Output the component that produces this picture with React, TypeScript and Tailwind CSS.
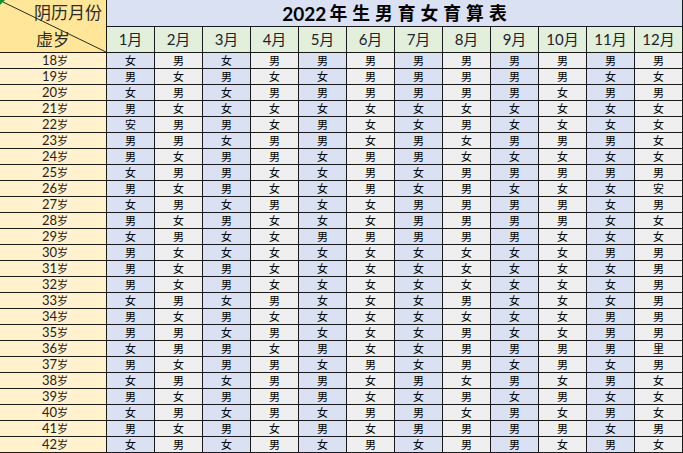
const months = ['1月', '2月', '3月', '4月', '5月', '6月', '7月', '8月', '9月', '10月', '11月', '12月']

// 男 = M, 女 = F; odd glyphs kept as they appear in the sheet
const rows: [number, string][] = [
  [18, 'FMFMMMMMMMMM'],
  [19, 'MFMFFMMMMMFF'],
  [20, 'FMFMMMMMMFMM'],
  [21, 'MFFFFFFFFFFF'],
  [22, '安MMFMFFMFFFF'],
  [23, 'MMFMMFMFMMMF'],
  [24, 'MFMMFMMFFFFF'],
  [25, 'FMMFFMFMMMMM'],
  [26, 'MFMFFMFMFFF安'],
  [27, 'FMFMFFMMMMFM'],
  [28, 'MFMFFFMMMMFF'],
  [29, 'FMFFMMMMMFFF'],
  [30, 'MFFFFFFFFFMM'],
  [31, 'MFMFFFFFFFFM'],
  [32, 'MFMFFFFFFFFM'],
  [33, 'FMFMFFFMFFFM'],
  [34, 'MFMFFFFFFFMM'],
  [35, 'MMFMFFFMFFMM'],
  [36, 'FMMFMFFMMMM里'],
  [37, 'MFMMFMFMFMFM'],
  [38, 'FMFMMFMFMFMF'],
  [39, 'MFMMMFFMFMFF'],
  [40, 'FMFMFMMFMFMF'],
  [41, 'MFMFMFMMMMFM'],
  [42, 'FMFMFMFMMFMF'],
]

const glyph = (c: string) => (c === 'M' ? '男' : c === 'F' ? '女' : c)

const cjk = { fontFamily: '"Noto Sans CJK SC", "Liberation Sans", sans-serif' }
const latin = { fontFamily: 'Lato, "Noto Sans CJK SC", sans-serif' }

export default function App() {
  return (
    <div className="h-[453px] w-[683px] overflow-hidden bg-white">
      <div className="grid grid-cols-[106px_repeat(12,47px)_0px] grid-rows-[26px_25px_repeat(25,15px)] gap-px bg-[#1a1a1a] pb-px">
        {/* corner cell with the diagonal */}
        <div className="relative row-span-2 bg-[#ffe699]" style={cjk}>
          <svg className="absolute inset-0" width="106" height="52" viewBox="0 0 106 52">
            <line x1="3" y1="2" x2="106" y2="52" stroke="#2a2a1a" strokeWidth="1" />
            <polygon points="0,0 5,0 0,5" fill="#1e8a2e" />
          </svg>
          <div className="flex h-full flex-col justify-between pb-[2px] pt-px text-[17px] leading-[22px] text-[#2b2b2b]">
            <span className="self-end pr-[4px]">阴历月份</span>
            <span className="pl-[36px]">虚岁</span>
          </div>
        </div>

        <div className="col-span-12 flex items-center justify-center bg-[#d9e1f2] pl-[5px] font-bold leading-none text-black">
          <span className="pr-[3px] text-[19px]" style={latin}>
            2022
          </span>
          <span className="text-[17.8px] tracking-[5px]" style={cjk}>
            年生男育女育算表
          </span>
        </div>
        <div className="row-span-[27] bg-[#d9e1f2]" />

        {months.map((m) => (
          <div
            key={m}
            className="flex items-center justify-center bg-[#e2efda] text-[15px] leading-none text-[#1c2230]"
            style={latin}
          >
            {m}
          </div>
        ))}

        {rows.map(([age, cells]) => (
          <Row key={age} age={age} cells={cells} />
        ))}
      </div>
    </div>
  )
}

function Row({ age, cells }: { age: number; cells: string }) {
  return (
    <>
      <div className="flex items-center justify-center overflow-hidden bg-[#fff2cc] pl-[4px] leading-none text-[#2a1a1a]">
        <span className="text-[13px]" style={latin}>
          {age}
        </span>
        <span className="text-[11px]" style={cjk}>
          岁
        </span>
      </div>
      {Array.from(cells).map((c, i) => (
        <div
          key={i}
          className={`flex items-center justify-center overflow-hidden text-[11px] leading-none text-black ${
            i % 2 === 0 ? 'bg-[#d9e1f2]' : 'bg-[#efefef]'
          }`}
          style={cjk}
        >
          {glyph(c)}
        </div>
      ))}
    </>
  )
}
